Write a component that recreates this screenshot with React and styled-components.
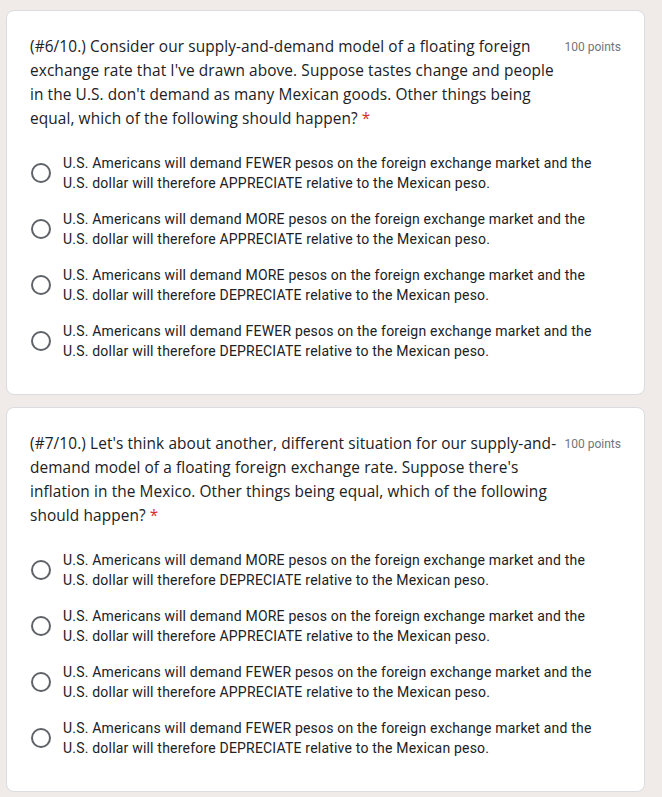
import styled, { createGlobalStyle } from "styled-components";

const GlobalStyle = createGlobalStyle`
  html, body {
    margin: 0;
    padding: 0;
    background: #f0ebe8;
  }
`;

const Page = styled.div`
  padding: 10px 17px 0 6px;
  display: flex;
  flex-direction: column;
  gap: 12px;
`;

const Card = styled.div`
  background: #ffffff;
  border: 1px solid #dadce0;
  border-radius: 8px;
  padding: 24px 23px 33px 23px;
`;

const Header = styled.div`
  display: flex;
  align-items: flex-start;
  justify-content: space-between;
`;

const Title = styled.div`
  font-family: "Open Sans", "Noto Sans", sans-serif;
  font-size: 15.4px;
  line-height: 24px;
  letter-spacing: 0.1px;
  color: #202124;
  width: 534px;
`;

const Required = styled.span`
  color: #d93025;
  margin-left: 4px;
`;

const Points = styled.div`
  font-family: Roboto, "Liberation Sans", sans-serif;
  font-size: 12px;
  line-height: 24px;
  color: #70757a;
  white-space: nowrap;
`;

const Options = styled.div`
  margin-top: 22px;
  display: flex;
  flex-direction: column;
  gap: 16px;
`;

const Option = styled.label`
  display: flex;
  align-items: center;
  gap: 12px;
  cursor: pointer;
`;

const Radio = styled.span`
  box-sizing: border-box;
  width: 20px;
  height: 20px;
  flex: none;
  border: 2px solid #5f6368;
  border-radius: 50%;
  margin-left: 1px;
`;

const OptionText = styled.span`
  font-family: Roboto, "Liberation Sans", sans-serif;
  font-size: 14px;
  line-height: 20px;
  letter-spacing: 0.2px;
  color: #202124;
  width: 540px;
`;

const questions = [
  {
    title:
      "(#6/10.) Consider our supply-and-demand model of a floating foreign exchange rate that I've drawn above. Suppose tastes change and people in the U.S. don't demand as many Mexican goods. Other things being equal, which of the following should happen?",
    options: [
      ["FEWER", "APPRECIATE"],
      ["MORE", "APPRECIATE"],
      ["MORE", "DEPRECIATE"],
      ["FEWER", "DEPRECIATE"],
    ],
  },
  {
    title:
      "(#7/10.) Let's think about another, different situation for our supply-and-demand model of a floating foreign exchange rate. Suppose there's inflation in the Mexico. Other things being equal, which of the following should happen?",
    options: [
      ["MORE", "DEPRECIATE"],
      ["MORE", "APPRECIATE"],
      ["FEWER", "APPRECIATE"],
      ["FEWER", "DEPRECIATE"],
    ],
  },
];

const App = () => {
  return (
    <Page>
      <GlobalStyle />
      {questions.map((q, i) => (
        <Card key={i}>
          <Header>
            <Title>
              {q.title}
              <Required>*</Required>
            </Title>
            <Points>100 points</Points>
          </Header>
          <Options>
            {q.options.map(([amount, dir], j) => (
              <Option key={j}>
                <Radio />
                <OptionText>
                  U.S. Americans will demand {amount} pesos on the foreign exchange market and the U.S. dollar will therefore {dir} relative to the Mexican peso.
                </OptionText>
              </Option>
            ))}
          </Options>
        </Card>
      ))}
    </Page>
  );
};

export default App;
